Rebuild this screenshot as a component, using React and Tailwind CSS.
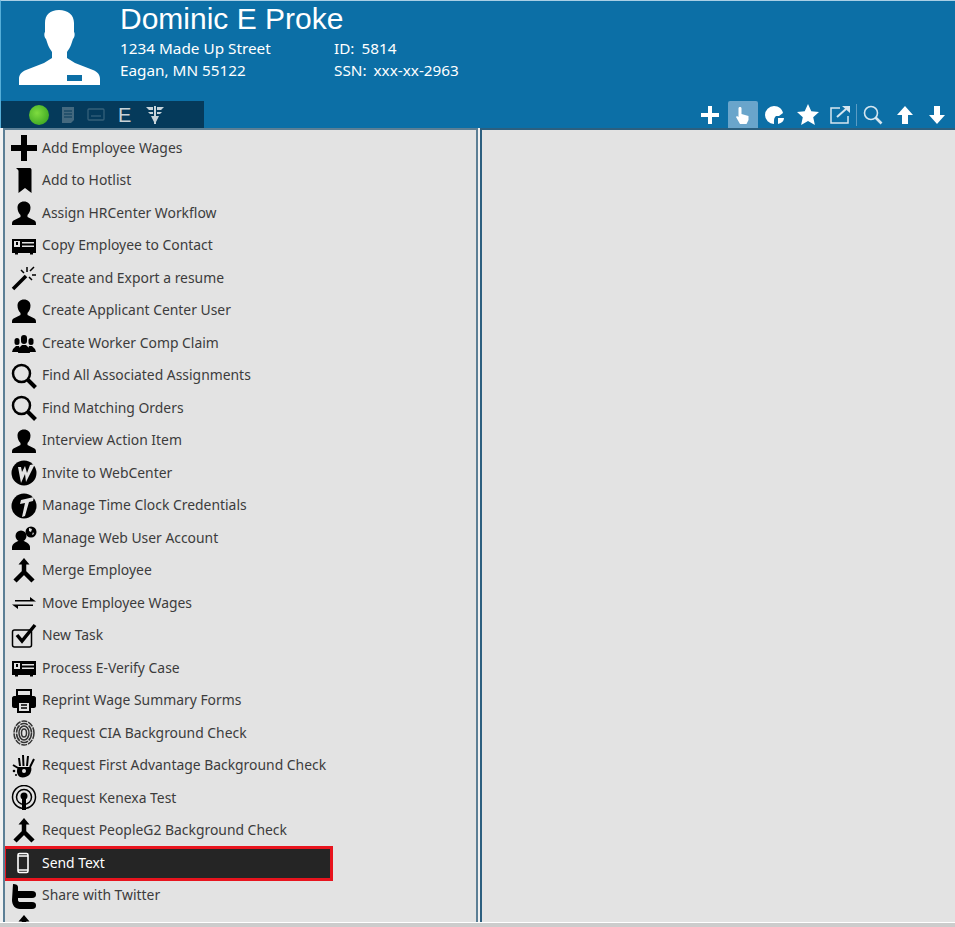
import React from 'react';

const Person = ({ className }) => (
  <svg viewBox="0 0 26 26" className={className} fill="currentColor">
    <path d="M13 1.500c3.800 0 6.500 2.500 6.500 6 0 3-1.200 6-3 7.500v2l7 3.500c1.300.7 1.500 2 1.500 4.500H1c0-2.500.2-3.800 1.500-4.500l7-3.500v-2c-1.800-1.500-3-4.500-3-7.500 0-3.500 2.700-6 6.500-6z" />
  </svg>
);

const Avatar = () => (
  <svg viewBox="0 0 81 75" className="ml-[18px] mt-[9px] h-[75px] w-[81px] shrink-0">
    <path
      d="M40 0c9 0 15 5 15 13v9c1 1 1 5-1 7l-2 6c-1 3-3 5-4 7v6l8 5 18 7c5 2 7 5 7 9v6H0v-6c0-4 2-7 7-9l18-7 8-5v-6c-1-2-3-4-4-7l-2-6c-2-2-2-6-1-7v-9C26 5 31 0 40 0z"
      fill="#fff"
    />
    <rect x="48" y="65" width="15" height="6" fill="#0c6fa6" />
  </svg>
);

const Card = () => (
  <svg viewBox="0 0 26 26" className="h-[26px] w-[26px]">
    <path d="M1 6h24v14h-3v1.500h-3V20H7v1.500H4V20H1z" fill="#000" />
    <rect x="3" y="8" width="6" height="6" fill="#e3e3e3" />
    <rect x="5" y="9" width="2" height="3" fill="#000" />
    <rect x="11" y="9" width="12" height="1.500" fill="#e3e3e3" />
    <rect x="11" y="12.500" width="12" height="1.500" fill="#e3e3e3" />
  </svg>
);

const Search = () => (
  <svg viewBox="0 0 26 26" className="h-[26px] w-[26px]" fill="none" stroke="#000">
    <circle cx="10.500" cy="10.500" r="8.500" strokeWidth="2.500" />
    <path d="M17 17l7.500 7.500" strokeWidth="4" />
  </svg>
);

const Merge = () => (
  <svg viewBox="0 0 26 26" className="h-[26px] w-[26px]" fill="none" stroke="#000" strokeWidth="4.500">
    <path d="M13 5v10M13 14l-9 9M13 14l9 9" />
    <path d="M13 0l5.500 6.500h-11z" fill="#000" stroke="none" />
  </svg>
);

const iconMap = {
  plus: (
    <svg viewBox="0 0 26 26" className="h-[26px] w-[26px]" fill="#000">
      <path d="M10 0h6v10h10v6H16v10h-6V16H0v-6h10z" />
    </svg>
  ),
  bookmark: (
    <svg viewBox="0 0 26 26" className="h-[26px] w-[26px]" fill="#000">
      <path d="M5 0h14c1 0 1.500 1 1.500 2v23L14 20l-6.500 5V3C7.500 2 6 1 5 0z" />
    </svg>
  ),
  person: <Person className="h-[26px] w-[26px] text-black" />,
  card: <Card />,
  wand: (
    <svg viewBox="0 0 26 26" className="h-[26px] w-[26px]" stroke="#000" fill="none">
      <path d="M2 24L15 11" strokeWidth="3.500" />
      <path d="M16 2v5M23 2l-4 4M25 10h-4M21 15l-3-3M10 5l3 3" strokeWidth="1.500" />
    </svg>
  ),
  group: (
    <svg viewBox="0 0 26 26" className="h-[26px] w-[26px]" fill="#000">
      <rect x="3.500" y="8" width="5" height="7" rx="2.500" />
      <rect x="17.500" y="8" width="5" height="7" rx="2.500" />
      <rect x="10" y="5" width="6" height="9" rx="3" />
      <path d="M1 22l1-3 3-3h3l2 6zM25 22l-1-3-3-3h-3l-2 6z" />
      <path d="M7 23l1-5 3-3h4l3 3 1 5z" />
    </svg>
  ),
  search: <Search />,
  webcenter: (
    <svg viewBox="0 0 26 26" className="h-[26px] w-[26px]">
      <circle cx="13" cy="13" r="12.500" fill="#000" />
      <path d="M7 7l3 16 4-9 1 8 9-18-5 1-3 8-2-7-3 6-1-5z" fill="#e3e3e3" />
    </svg>
  ),
  clock: (
    <svg viewBox="0 0 26 26" className="h-[26px] w-[26px]">
      <circle cx="13" cy="13" r="12.500" fill="#000" />
      <path d="M10 7l13-3-1 4-4 1-4 14-3 1 3-14-5 1z" fill="#e3e3e3" />
    </svg>
  ),
  webuser: (
    <svg viewBox="0 0 26 26" className="h-[26px] w-[26px]" fill="#000">
      <circle cx="10" cy="11" r="5.500" />
      <path d="M1 25v-3c0-3 4-5 6-6h6c2 1 6 3 6 6v3z" />
      <circle cx="20" cy="7" r="5.500" />
      <path d="M18 3l3 1-1 3-2-1zM22 7l1 2-2 1z" fill="#e3e3e3" />
    </svg>
  ),
  merge: <Merge />,
  move: (
    <svg viewBox="0 0 26 26" className="h-[26px] w-[26px]" fill="#000">
      <path d="M4 10h15V7l6 4.500H4zM1 14.500h21V16H7v3z" />
    </svg>
  ),
  task: (
    <svg viewBox="0 0 26 26" className="h-[26px] w-[26px]" fill="none" stroke="#000">
      <rect x="1.500" y="7" width="19" height="17" rx="2" strokeWidth="1.500" />
      <path d="M6 12l5 6L24 2" strokeWidth="3.500" />
    </svg>
  ),
  printer: (
    <svg viewBox="0 0 26 26" className="h-[26px] w-[26px]">
      <path d="M6 2h14v6H6z" fill="none" stroke="#000" strokeWidth="2" />
      <path d="M3 8h20c1 0 2 1 2 2v8c0 1-1 2-2 2h-3v5H6v-5H3c-1 0-2-1-2-2v-8c0-1 1-2 2-2z" fill="#000" />
      <path d="M8 15h10v8H8z" fill="#e3e3e3" />
      <path d="M10 17h6M10 20h6" stroke="#000" strokeWidth="1.500" />
    </svg>
  ),
  finger: (
    <svg viewBox="0 0 26 26" className="h-[26px] w-[26px]" fill="none" stroke="#333" strokeWidth="1.500">
      <ellipse cx="13" cy="13" rx="10" ry="12" strokeDasharray="6 1" />
      <ellipse cx="13" cy="13" rx="7.500" ry="9.500" strokeDasharray="8 1" />
      <ellipse cx="13" cy="13" rx="5" ry="7" />
      <ellipse cx="13" cy="13" rx="2.500" ry="4" />
    </svg>
  ),
  hand: (
    <svg viewBox="0 0 26 26" className="h-[26px] w-[26px]" fill="#000">
      <path d="M7 14h13c1 2 0 5-1 7-2 3-7 4-10 3-3-2-4-6-2-10z" />
      <path d="M9 13L8 5M12.500 13L12 2M16 13l1-10M19 14l4-8" stroke="#000" strokeWidth="2" />
      <path d="M7 15l-5-3" stroke="#000" strokeWidth="2" />
      <circle cx="3" cy="18" r="1.300" />
      <circle cx="5" cy="22" r="1" />
      <circle cx="13" cy="18" r="2" fill="#e3e3e3" />
    </svg>
  ),
  kenexa: (
    <svg viewBox="0 0 26 26" className="h-[26px] w-[26px]" fill="none" stroke="#000">
      <circle cx="13" cy="12" r="11.500" strokeWidth="1.500" />
      <circle cx="13" cy="12" r="7.500" strokeWidth="1.500" />
      <circle cx="13" cy="11" r="3.500" fill="#000" stroke="none" />
      <path d="M13 13v12" strokeWidth="4" />
    </svg>
  ),
  phone: (
    <svg viewBox="0 0 26 26" className="h-[26px] w-[26px]" fill="none" stroke="#fff">
      <rect x="8" y="3.500" width="10" height="19" rx="1.500" strokeWidth="1.600" />
      <path d="M8 6h10M8 20h10" strokeWidth="1.600" />
    </svg>
  ),
  twitter: (
    <svg viewBox="0 0 26 26" className="h-[26px] w-[26px]" fill="#000">
      <path d="M2 1c3 0 5 1 5 3v4h14c3 0 4 1.500 4 3.500S24 15 21 15H7v2c0 1.500 1 2 2.500 2H21c3 0 4 1.500 4 3.500S24 26 21 26H9C4 26 1 22 1 17z" />
    </svg>
  ),
};

const actions = [
  ['plus', 'Add Employee Wages'],
  ['bookmark', 'Add to Hotlist'],
  ['person', 'Assign HRCenter Workflow'],
  ['card', 'Copy Employee to Contact'],
  ['wand', 'Create and Export a resume'],
  ['person', 'Create Applicant Center User'],
  ['group', 'Create Worker Comp Claim'],
  ['search', 'Find All Associated Assignments'],
  ['search', 'Find Matching Orders'],
  ['person', 'Interview Action Item'],
  ['webcenter', 'Invite to WebCenter'],
  ['clock', 'Manage Time Clock Credentials'],
  ['webuser', 'Manage Web User Account'],
  ['merge', 'Merge Employee'],
  ['move', 'Move Employee Wages'],
  ['task', 'New Task'],
  ['card', 'Process E-Verify Case'],
  ['printer', 'Reprint Wage Summary Forms'],
  ['finger', 'Request CIA Background Check'],
  ['hand', 'Request First Advantage Background Check'],
  ['kenexa', 'Request Kenexa Test'],
  ['merge', 'Request PeopleG2 Background Check'],
  ['phone', 'Send Text', true],
  ['twitter', 'Share with Twitter'],
  ['merge', ''],
];

function ActionRow({ icon, label, active }) {
  if (active) {
    return (
      <div className="relative z-10 -my-[1px] -ml-[2px] flex h-[34.5px] w-[330px] items-center gap-[6px] border-[3px] border-[#e8141e] bg-[#252525] pl-[4px] text-white">
        {iconMap[icon]}
        <span>{label}</span>
      </div>
    );
  }
  return (
    <div className="flex h-[32.5px] items-center gap-[5px] pl-[6px]">
      {iconMap[icon]}
      <span>{label}</span>
    </div>
  );
}

function ToolbarIcons() {
  return (
    <div className="flex h-[27px] items-center text-white">
      <svg viewBox="0 0 20 20" className="mr-[8px] h-[20px] w-[20px]" fill="#fff">
        <path d="M8 1h4v7h7v4h-7v7H8v-7H1V8h7z" />
      </svg>
      <div className="flex h-[27px] w-[30px] items-center justify-center rounded-t-[2px] bg-[#6aa5cb]">
        <svg viewBox="0 0 20 20" className="h-[20px] w-[20px]" fill="#fff">
          <path d="M7 2c1 0 1.500.5 1.500 1.500V9l7 2v4l-2 4H7l-4-7 1-1 1.500 1V3.500C5.500 2.500 6 2 7 2z" />
        </svg>
      </div>
      <svg viewBox="0 0 20 20" className="ml-[7px] h-[20px] w-[20px]" fill="#fff">
        <path d="M9 1a9 9 0 1 0 0 18c0-5 0-6 2-8h3l4-3C17 4 14 1 9 1z" />
        <path d="M13 13h6c0 3-2 5-6 6z" />
      </svg>
      <svg viewBox="0 0 24 24" className="ml-[11px] h-[24px] w-[24px]" fill="#fff">
        <path d="M12 1l3.300 7.300 7.700.8-5.800 5.200 1.700 7.700-6.900-4-6.900 4 1.700-7.700L1 9.100l7.700-.8z" />
      </svg>
      <svg viewBox="0 0 22 20" className="ml-[9px] h-[20px] w-[22px]" fill="none" stroke="#d5e6f0" strokeWidth="1.500">
        <path d="M11 3H2v15h17v-7" />
        <path d="M8 12l9-8" strokeWidth="2" />
        <path d="M13 1h8v7z" fill="#d5e6f0" stroke="none" />
      </svg>
      <div className="ml-[5px] h-[22px] w-px bg-[#5b9cc4]" />
      <svg viewBox="0 0 20 20" className="ml-[6px] h-[20px] w-[20px]" fill="none" stroke="#d5e6f0">
        <circle cx="8" cy="8" r="6.500" strokeWidth="1.600" />
        <path d="M12.500 12.500l6 6" strokeWidth="2.600" />
      </svg>
      <svg viewBox="0 0 20 20" className="ml-[12px] h-[20px] w-[20px]" fill="#fff">
        <path d="M10 1l8 9h-5v9H7v-9H2z" />
      </svg>
      <svg viewBox="0 0 20 20" className="ml-[12px] mr-[8px] h-[20px] w-[20px]" fill="#fff">
        <path d="M7 1h6v9h5l-8 9-8-9h5z" />
      </svg>
    </div>
  );
}

function StatusIcons() {
  return (
    <div className="flex h-[27px] w-[203px] items-center bg-[#053a5b] pl-[28px]">
      <div className="h-[20px] w-[20px] rounded-full bg-[radial-gradient(circle_at_40%_40%,#7fdc3f,#2c9a1c)]" />
      <svg viewBox="0 0 14 18" className="ml-[12px] h-[18px] w-[14px]" fill="#44697f">
        <path d="M1 1h12v13l-3 3H1z" />
        <path d="M3 5h8M3 8h8M3 11h8" stroke="#053a5b" />
      </svg>
      <svg viewBox="0 0 18 14" className="ml-[12px] h-[14px] w-[18px]" fill="none" stroke="#35607a" strokeWidth="1.300">
        <rect x="1" y="1" width="16" height="11" rx="1" />
        <path d="M4 8h10" />
      </svg>
      <span className="ml-[13px] text-[20px] leading-none text-[#c8d2d8] [font-family:'Liberation_Sans',sans-serif]">E</span>
      <svg viewBox="0 0 18 18" className="ml-[15px] h-[18px] w-[18px]" fill="#c8d4db">
        <path d="M0 1h7v3H3zM18 1h-7v3h4zM2 6h5v2H4zM16 6h-5v2h3zM8 0h2v18H8zM5 10h8l-3 6H8z" />
      </svg>
    </div>
  );
}

export default function App() {
  return (
    <div className="flex h-[927px] w-[955px] flex-col overflow-hidden bg-[#cccccc] font-['Noto_Sans',sans-serif] text-[13.9px] text-[#3c3c3c]">
      <header className="h-[128px] shrink-0 border-t border-l border-t-[#a9cfe5] border-l-[#55aed8] bg-[#0c6fa6]">
        <div className="flex h-[99px]">
          <Avatar />
          <div className="ml-[20px] text-white">
            <h1 className="text-[30px] leading-[36px] [font-family:'Liberation_Sans',sans-serif]">Dominic E Proke</h1>
            <div className="flex text-[15.3px]">
              <div className="w-[214px] leading-[22px]">
                <p>1234 Made Up Street</p>
                <p>Eagan, MN 55122</p>
              </div>
              <div className="leading-[22px]">
                <p>ID: <span className="ml-[3px]">5814</span></p>
                <p>SSN: <span className="ml-[3px]">xxx-xx-2963</span></p>
              </div>
            </div>
          </div>
        </div>
        <div className="mt-px flex items-end justify-between">
          <StatusIcons />
          <ToolbarIcons />
        </div>
      </header>
      <main className="flex h-[794px] shrink-0 gap-[2px] bg-[#f2f2f2] pl-[3px]">
        <section className="w-[475px] overflow-hidden border-x-2 border-t-2 border-[#5c7f95] bg-[#e3e3e3] pt-[2px]">
          {actions.map(([icon, label, active], i) => (
            <ActionRow key={i} icon={icon} label={label} active={active} />
          ))}
        </section>
        <section className="flex-1 border-l-2 border-t-2 border-[#2c5f7f] bg-[#e3e3e3]" />
      </main>
      <div className="h-px shrink-0 bg-white" />
    </div>
  );
}
